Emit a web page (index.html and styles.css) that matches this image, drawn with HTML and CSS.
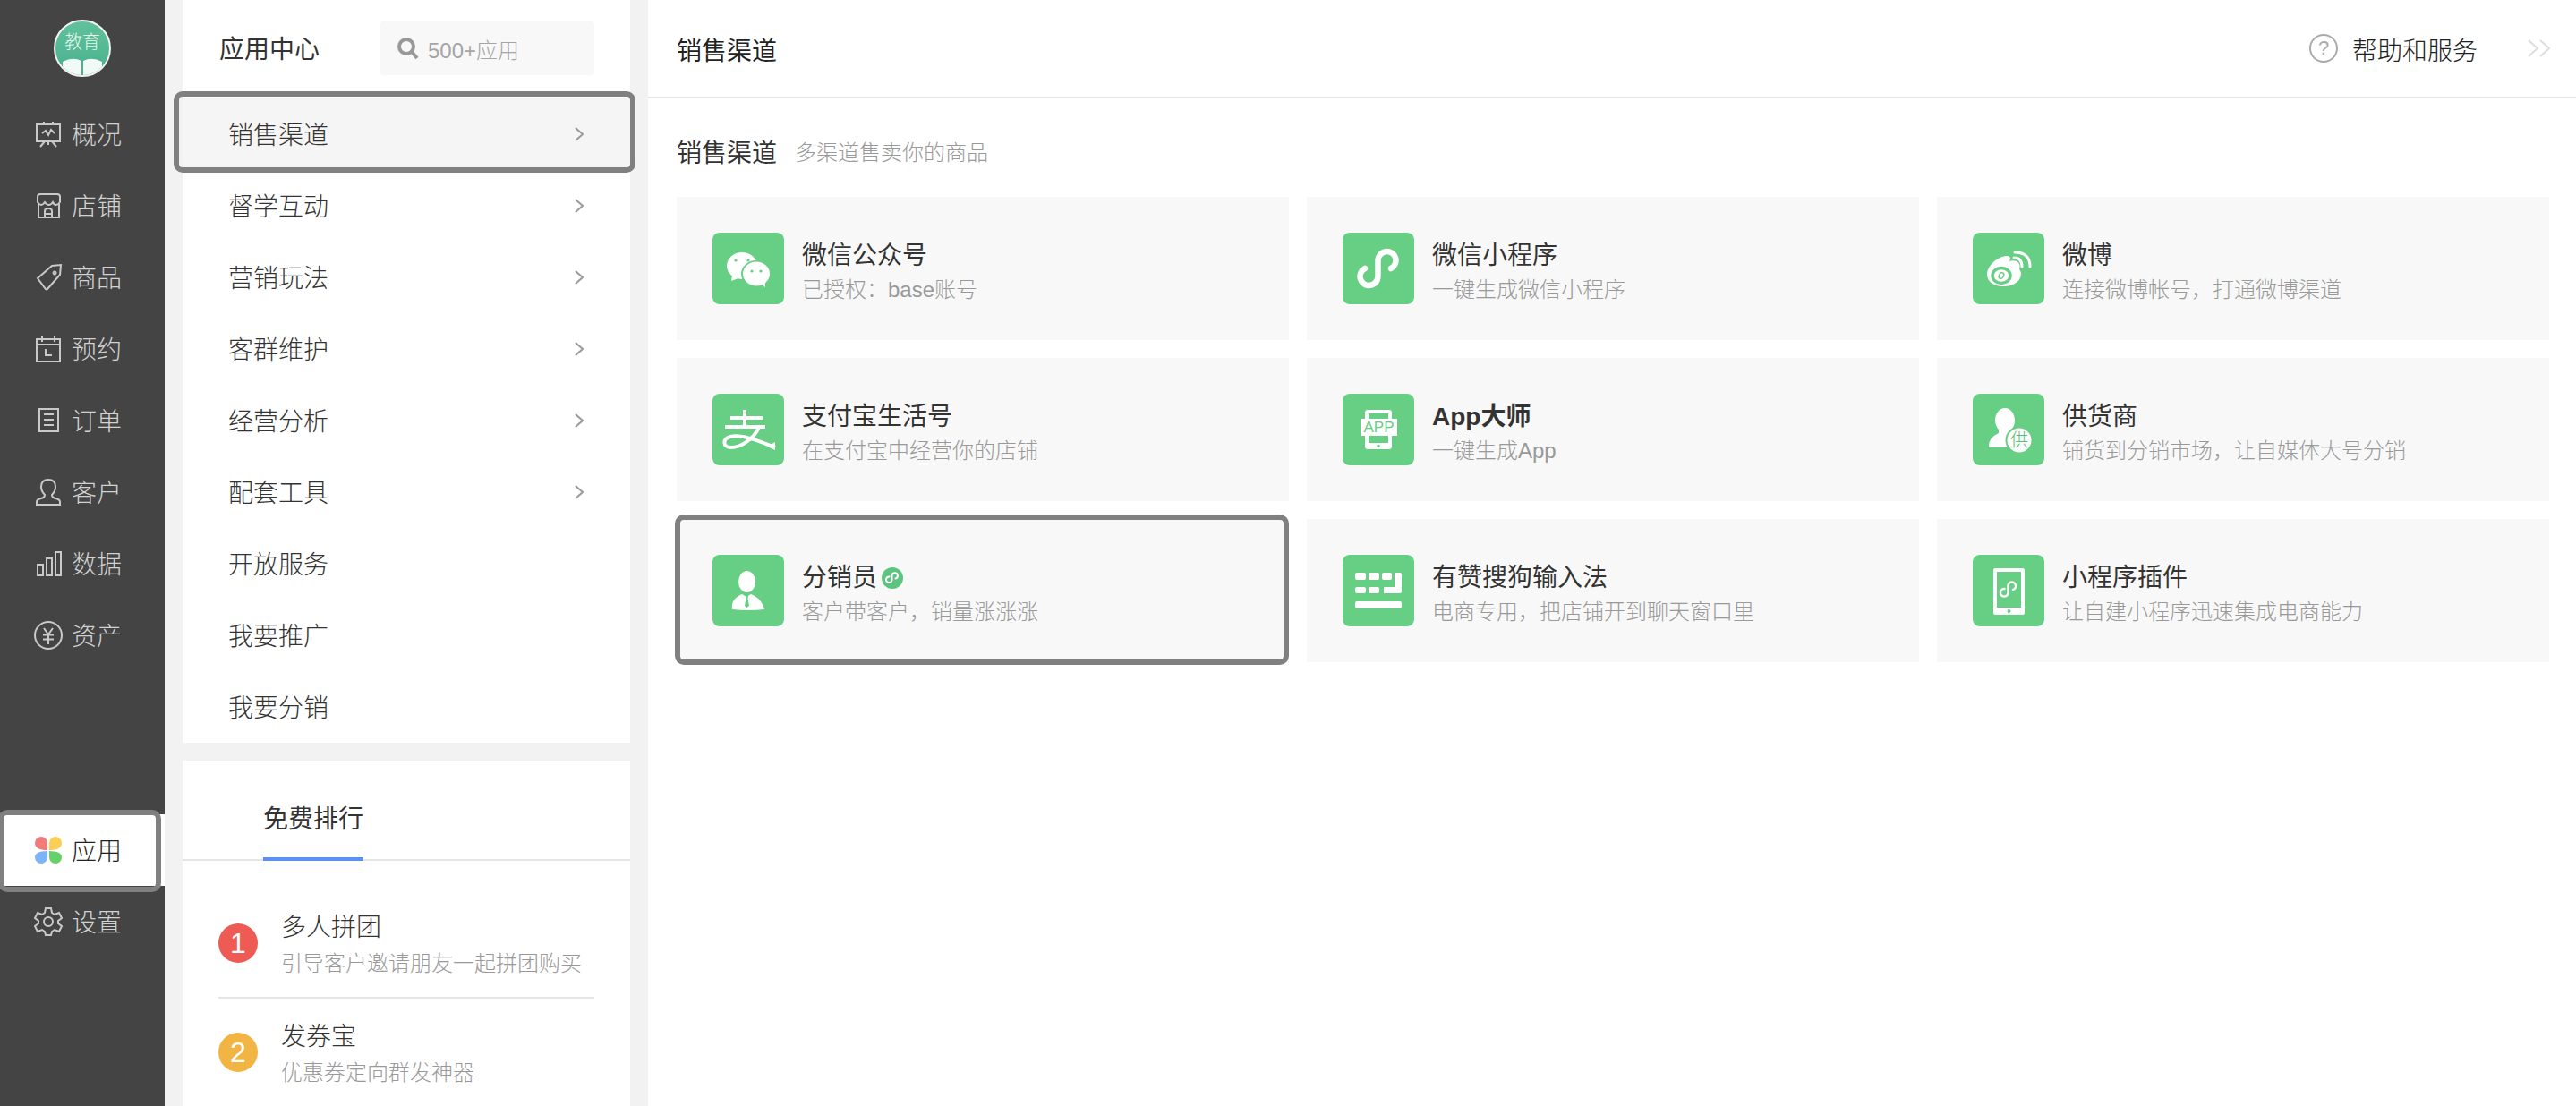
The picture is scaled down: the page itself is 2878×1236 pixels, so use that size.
FILE: index.html
```html
<!DOCTYPE html>
<html lang="zh-CN">
<head>
<meta charset="utf-8">
<title>应用中心</title>
<link rel="stylesheet" href="styles.css">
</head>
<body>
<svg class="defs" width="0" height="0" aria-hidden="true">
  <symbol id="chev" viewBox="0 0 12 16"><path d="M2 1l8 7-8 7" fill="none" stroke="#999" stroke-width="2"/></symbol>
</svg>
<aside class="nav">
  <div class="logo-wrap">
    <div class="avatar">
      <svg width="64" height="64" viewBox="0 0 64 64">
        <defs>
          <linearGradient id="ag" x1="0" y1="0" x2="0" y2="1"><stop offset="0" stop-color="#60c29d"/><stop offset="1" stop-color="#48b08b"/></linearGradient>
          <clipPath id="ac"><circle cx="32" cy="32" r="30"/></clipPath>
        </defs>
        <circle cx="32" cy="32" r="31" fill="url(#ag)" stroke="#f2f2f2" stroke-width="2"/>
        <path clip-path="url(#ac)" d="M10 47q11-6 21-1v20H10zM33 46q10-5 21 1v19H33z" fill="#f0fbf7"/>
        <text x="32" y="32" text-anchor="middle" class="avatar-text">教育</text>
      </svg>
    </div>
  </div>
  <a class="nav-item"><span class="nav-icon"><svg width="32" height="32" viewBox="0 0 32 32" class="ln"><path d="M3 5h26v19H3zM11 5V2M21 5V2M12 24l-5 6M20 24l5 6M16 24v4M9 15l4-3 3 5 3-6 4 4"/></svg></span><span class="nav-label">概况</span></a>
  <a class="nav-item"><span class="nav-icon"><svg width="32" height="32" viewBox="0 0 32 32" class="ln"><path d="M5 14v15h23V14M4 6q0-3 3-3h19q3 0 3 3v6q-2 3-4.300 3T21 12q-2 3-4.500 3T12 12q-2 3-4 3t-4-3zM12 29v-7q0-3 4-3t4 3v7M12 25h8"/></svg></span><span class="nav-label">店铺</span></a>
  <a class="nav-item"><span class="nav-icon"><svg width="32" height="32" viewBox="0 0 32 32" class="ln"><path d="M4 17L20 3l10-1-1 11-14 16q-1 1-2 0zM23 9.500a1.500 1.500 0 1 0 .1 0"/></svg></span><span class="nav-label">商品</span></a>
  <a class="nav-item"><span class="nav-icon"><svg width="32" height="32" viewBox="0 0 32 32" class="ln"><path d="M3 5h26v25H3zM3 11h26M9 2v6M23 2v6M13 16v7h7"/></svg></span><span class="nav-label">预约</span></a>
  <a class="nav-item"><span class="nav-icon"><svg width="32" height="32" viewBox="0 0 32 32" class="ln"><path d="M6 3h21v25H6zM11 9h11M11 15h11M11 21h11"/></svg></span><span class="nav-label">订单</span></a>
  <a class="nav-item"><span class="nav-icon"><svg width="32" height="32" viewBox="0 0 32 32" class="ln"><path d="M3 30v-3q0-3 5-4 4-1 4-4-4-4-4-9 0-8 8-8t8 8q0 5-4 9 0 3 4 4 5 1 5 4v3z"/></svg></span><span class="nav-label">客户</span></a>
  <a class="nav-item"><span class="nav-icon"><svg width="32" height="32" viewBox="0 0 32 32" class="ln"><path d="M4 17h6v12H4zM14 10h6v19h-6zM24 3h6v26h-6z"/></svg></span><span class="nav-label">数据</span></a>
  <a class="nav-item"><span class="nav-icon"><svg width="32" height="32" viewBox="0 0 32 32" class="ln"><circle cx="16" cy="16" r="15"/><path d="M11 8l5 7 5-7M10 15.500h12M10 20.500h12M16 15v11"/></svg></span><span class="nav-label">资产</span></a>
  <a class="nav-item is-active"><span class="nav-icon"><svg width="32" height="32" viewBox="0 0 32 32"><path d="M15 16V8a7 7 0 0 0-14 0q0 8 14 8z" fill="#ef7b7b"/><path d="M17 16V8a7 7 0 0 1 14 0q0 8-14 8z" fill="#fbcf55"/><path d="M15 17v7a7 7 0 0 1-14 0q0-7 14-7z" fill="#7db3f9"/><path d="M17 17v7a7 7 0 0 0 14 0q0-7-14-7z" fill="#66d16a"/></svg></span><span class="nav-label">应用</span></a>
  <a class="nav-item"><span class="nav-icon"><svg width="32" height="32" viewBox="0 0 32 32" class="ln"><path d="M13 1h6l1 5 3 2 5-2 3 6-4 3v3l4 3-3 6-5-2-3 2-1 4h-6l-1-4-3-2-5 2-3-6 4-3v-3l-4-3 3-6 5 2 3-2z"/><circle cx="16" cy="16" r="5"/></svg></span><span class="nav-label">设置</span></a>
</aside>

<div class="apps">
  <section class="menu-panel">
    <div class="menu-head">
      <span class="menu-title">应用中心</span>
      <div class="search">
        <svg width="24" height="24" viewBox="0 0 24 24"><circle cx="10" cy="10" r="8" fill="none" stroke="#999" stroke-width="4"/><path d="M16 16l6 7" stroke="#999" stroke-width="4"/></svg>
        <span>500+应用</span>
      </div>
    </div>
    <a class="menu-item is-focus">销售渠道<svg class="chev"><use href="#chev"/></svg></a>
    <a class="menu-item">督学互动<svg class="chev"><use href="#chev"/></svg></a>
    <a class="menu-item">营销玩法<svg class="chev"><use href="#chev"/></svg></a>
    <a class="menu-item">客群维护<svg class="chev"><use href="#chev"/></svg></a>
    <a class="menu-item">经营分析<svg class="chev"><use href="#chev"/></svg></a>
    <a class="menu-item">配套工具<svg class="chev"><use href="#chev"/></svg></a>
    <a class="menu-item">开放服务</a>
    <a class="menu-item">我要推广</a>
    <a class="menu-item">我要分销</a>
  </section>
  <section class="rank-panel">
    <div class="tabs"><span class="tab">免费排行</span></div>
    <ul class="rank-list">
      <li class="rank">
        <span class="rank-no red">1</span>
        <div><div class="rank-title">多人拼团</div><div class="rank-sub">引导客户邀请朋友一起拼团购买</div></div>
      </li>
      <li class="rank">
        <span class="rank-no orange">2</span>
        <div><div class="rank-title">发券宝</div><div class="rank-sub">优惠券定向群发神器</div></div>
      </li>
    </ul>
  </section>
</div>

<main class="main">
  <header class="top">
    <span class="top-title">销售渠道</span>
    <div class="help">
      <svg width="32" height="32" viewBox="0 0 32 32"><circle cx="16" cy="16" r="15" fill="none" stroke="#aaa" stroke-width="2"/><text x="16" y="23" text-anchor="middle" class="q">?</text></svg>
      <span class="help-label">帮助和服务</span>
    </div>
    <svg class="collapse" width="26" height="20" viewBox="0 0 26 20"><path d="M1 1l10 9-10 9M14 1l10 9-10 9" fill="none" stroke="#ddd" stroke-width="2"/></svg>
  </header>
  <div class="content">
    <h2 class="sec"><span class="sec-title">销售渠道</span><span class="sec-sub">多渠道售卖你的商品</span></h2>
    <div class="grid">
      <a class="card">
        <span class="ico"><svg width="80" height="80" viewBox="0 0 80 80">
          <ellipse cx="33" cy="37" rx="17" ry="15" fill="#fff"/><path d="M22 48l-1 6 8-3z" fill="#fff"/>
          <ellipse cx="49" cy="46" rx="17" ry="15" fill="#66cf84"/><ellipse cx="49" cy="46" rx="15" ry="13.500" fill="#fff"/><path d="M54 57l5 4 0-6z" fill="#fff"/>
          <g fill="#66cf84"><circle cx="26" cy="31" r="1.600"/><circle cx="40" cy="31" r="1.600"/><circle cx="44" cy="43" r="1.600"/><circle cx="54" cy="43" r="1.600"/></g>
        </svg></span>
        <span class="txt"><span class="t">微信公众号</span><span class="s">已授权：base账号</span></span>
      </a>
      <a class="card">
        <span class="ico"><svg width="80" height="80" viewBox="0 0 80 80"><path d="M25 40A10 10 0 1 0 39.500 49V31A10 10 0 1 1 54 40" fill="none" stroke="#fff" stroke-width="6.500" stroke-linecap="round"/></svg></span>
        <span class="txt"><span class="t">微信小程序</span><span class="s">一键生成微信小程序</span></span>
      </a>
      <a class="card">
        <span class="ico"><svg width="80" height="80" viewBox="0 0 80 80">
          <path d="M16 47c0-9 10-20 22-21 5 0 4 4 3 6 5-2 14 0 11 9 5 5 1 19-18 19-11 0-18-6-18-13z" fill="#fff"/>
          <ellipse cx="32" cy="48" rx="10" ry="8.500" fill="none" stroke="#66cf84" stroke-width="3.500"/>
          <ellipse cx="32" cy="48" rx="2.500" ry="3.500" fill="none" stroke="#66cf84" stroke-width="1.500" transform="rotate(25 32 48)"/>
          <path d="M46 28q9 0 9 10M47 22q17 0 17 16" fill="none" stroke="#fff" stroke-width="3" stroke-linecap="round"/>
        </svg></span>
        <span class="txt"><span class="t">微博</span><span class="s">连接微博帐号，打通微博渠道</span></span>
      </a>
      <a class="card">
        <span class="ico"><svg width="80" height="80" viewBox="0 0 80 80"><path d="M20 27h36M36 18v19M14 37h45M52 37C46 52 30 60 21 60 11 60 11 50 20 48 32 45 50 52 70 60" fill="none" stroke="#fff" stroke-width="4"/><path d="M70 54v9l-9-4z" fill="#fff"/></svg></span>
        <span class="txt"><span class="t">支付宝生活号</span><span class="s">在支付宝中经营你的店铺</span></span>
      </a>
      <a class="card">
        <span class="ico"><svg width="80" height="80" viewBox="0 0 80 80">
          <rect x="25" y="18" width="30" height="44" rx="3" fill="#fff"/>
          <path d="M29 22h22v6H29zM29 47h22v8H29z" fill="#66cf84"/><circle cx="40" cy="58.500" r="1.800" fill="#66cf84"/>
          <rect x="20" y="28" width="41" height="19" fill="#fff"/>
          <text x="40.500" y="43" text-anchor="middle" class="app-t">APP</text>
        </svg></span>
        <span class="txt"><span class="t b">App大师</span><span class="s">一键生成App</span></span>
      </a>
      <a class="card">
        <span class="ico"><svg width="80" height="80" viewBox="0 0 80 80">
          <path d="M36 16c6 0 11 6 11 14 0 5-2 8-4 10l1 3c-4 3-6 7-6 12l0 5H20q-2 0-2-2 0-9 11-14v-4c-2-2-4-6-4-10 0-8 5-14 11-14z" fill="#fff"/>
          <circle cx="52" cy="52" r="15.500" fill="#66cf84"/><circle cx="52" cy="52" r="13.500" fill="#fff"/>
          <text x="52" y="59" text-anchor="middle" class="gong">供</text>
        </svg></span>
        <span class="txt"><span class="t">供货商</span><span class="s">铺货到分销市场，让自媒体大号分销</span></span>
      </a>
      <a class="card is-focus">
        <span class="ico"><svg width="80" height="80" viewBox="0 0 80 80">
          <ellipse cx="38.500" cy="30" rx="9.500" ry="12" fill="#fff"/>
          <path d="M22 61c-1-8 2-13 11-17l5 3 5-3c9 4 13 9 15 17q-18 2-36 0z" fill="#fff"/>
          <path d="M37 46h3l-.5 3 1.500 8-2.500 2-2.500-2 1.500-8z" fill="#66cf84"/>
        </svg></span>
        <span class="txt"><span class="t">分销员<svg class="mini" width="24" height="24" viewBox="0 0 24 24"><circle cx="12" cy="12" r="12" fill="#5cc47e"/><path d="M8.500 10.500A3.300 3.300 0 1 0 11.500 14V9.500A3.200 3.200 0 1 1 15.500 12.500" fill="none" stroke="#fff" stroke-width="2" stroke-linecap="round"/></svg></span><span class="s">客户带客户，销量涨涨涨</span></span>
      </a>
      <a class="card">
        <span class="ico"><svg width="80" height="80" viewBox="0 0 80 80"><g fill="#fff"><rect x="14" y="20" width="12" height="8" rx="2"/><rect x="29" y="20" width="12" height="8" rx="2"/><rect x="44" y="20" width="11" height="8" rx="2"/><path d="M58 20h6q2 0 2 2v19q0 2-2 2H46v-7h12z"/><rect x="14" y="36" width="12" height="7" rx="2"/><rect x="29" y="36" width="12" height="7" rx="2"/><rect x="14" y="52" width="52" height="8" rx="2"/></g></svg></span>
        <span class="txt"><span class="t">有赞搜狗输入法</span><span class="s">电商专用，把店铺开到聊天窗口里</span></span>
      </a>
      <a class="card">
        <span class="ico"><svg width="80" height="80" viewBox="0 0 80 80">
          <rect x="23" y="15" width="35" height="52" rx="2" fill="#fff"/><rect x="27" y="19" width="27" height="40" fill="#66cf84"/><circle cx="40.500" cy="63" r="2" fill="#66cf84"/>
          <path d="M35.500 38A4.300 4.300 0 1 0 39.500 43V35A4.300 4.300 0 1 1 45 39" fill="none" stroke="#fff" stroke-width="2.500" stroke-linecap="round"/>
        </svg></span>
        <span class="txt"><span class="t">小程序插件</span><span class="s">让自建小程序迅速集成电商能力</span></span>
      </a>
    </div>
  </div>
</main>
</body>
</html>
```
FILE: styles.css
```css
* { box-sizing: border-box; }
html, body { margin: 0; padding: 0; height: 100%; overflow: hidden; }
body {
  display: flex;
  background: #fff;
  color: #333;
  font-family: "Liberation Sans", "Noto Sans CJK SC", sans-serif;
  font-size: 28px;
  font-weight: 300;
}
.defs { position: absolute; }
a { color: inherit; text-decoration: none; }

/* left rail */
.nav { width: 184px; flex: none; background: #444; color: #d2d2d2; }
.logo-wrap { height: 110px; padding: 22px 0 0 60px; }
.avatar { width: 64px; height: 64px; }
.avatar-text { font-size: 20px; fill: #e4f6ee; }
.nav-item { display: flex; align-items: center; height: 80px; padding-left: 38px; line-height: 40px; position: relative; }
.nav-icon { width: 32px; height: 32px; margin-right: 10px; display: block; }
.nav-label { padding-top: 3px; }
.ln { fill: none; stroke: #c9c9c9; stroke-width: 2; }
.nav-item.is-active { background: #fff; color: #222; margin-top: 160px; }
.nav-item.is-active::after {
  content: "";
  position: absolute;
  left: -2px; right: 4px; top: -5px; bottom: -7px;
  border: 6px solid #808080;
  border-radius: 10px;
}

/* app column */
.apps { width: 540px; flex: none; padding: 0 20px; background: #f2f2f2; display: flex; flex-direction: column; gap: 20px; }
.menu-panel { background: #fff; height: 830px; flex: none; }
.menu-head { height: 110px; display: flex; align-items: flex-start; padding: 24px 40px 0 41px; justify-content: space-between; }
.menu-title { line-height: 60px; padding-top: 2px; font-weight: 400; color: #333; }
.search { width: 240px; height: 60px; border-radius: 4px; background: #f8f8f8; display: flex; align-items: center; padding-left: 20px; gap: 10px; color: #a5a5a5; font-size: 24px; }
.menu-item { display: flex; align-items: center; justify-content: space-between; height: 80px; padding: 0 51px 2px; position: relative; color: #333; }
.chev { width: 12px; height: 16px; margin-top: 2px; }
.menu-item.is-focus { background: #f5f5f5; }
.menu-item.is-focus::after {
  content: "";
  position: absolute;
  left: -10px; right: -6px; top: -8px; bottom: -3px;
  border: 6px solid #808080;
  border-radius: 10px;
}

.rank-panel { background: #fff; flex: 1; min-height: 0; overflow: hidden; }
.tabs { height: 112px; border-bottom: 2px solid #e5e5e5; padding-left: 90px; }
.tab { display: block; width: 112px; height: 112px; padding-top: 46px; line-height: 40px; border-bottom: 4px solid #5b8ff0; font-weight: 400; color: #333; }
.rank-list { list-style: none; margin: 32px 40px 0; padding: 0; }
.rank { display: flex; align-items: flex-start; gap: 26px; height: 122px; padding-top: 23px; border-bottom: 2px solid #e5e5e5; }
.rank:last-child { border-bottom: 0; }
.rank-no { width: 44px; height: 44px; border-radius: 50%; margin-top: 15px; color: #fff; text-align: center; line-height: 44px; font-size: 32px; flex: none; }
.red { background: #ee5b55; }
.orange { background: #f2b544; }
.rank-title { line-height: 40px; color: #333; }
.rank-sub { line-height: 36px; padding-top: 2px; font-size: 24px; color: #999; }

/* main */
.main { flex: 1; min-width: 0; }
.top { height: 110px; border-bottom: 2px solid #e5e5e5; display: flex; align-items: center; padding: 0 28px 0 32px; }
.top-title { flex: 1; padding-top: 2px; font-weight: 400; color: #222; }
.help { display: flex; align-items: center; gap: 16px; color: #222; }
.help-label { padding-top: 2px; }
.q { font-size: 22px; fill: #aaa; }
.collapse { margin-left: 56px; }
.content { padding: 40px 30px 0 32px; }
.sec { margin: 0 0 30px; height: 40px; font-weight: normal; font-size: 28px; line-height: 40px; display: flex; align-items: center; gap: 20px; }
.sec-title { font-weight: 400; padding-top: 3px; color: #333; }
.sec-sub { font-size: 24px; padding-top: 2px; font-weight: 300; color: #999; }
.grid { display: grid; grid-template-columns: repeat(3, 684px); grid-auto-rows: 160px; gap: 20px; }
.card { display: flex; align-items: flex-start; padding: 40px; gap: 20px; background: #f8f8f8; position: relative; }
.card.is-focus::after {
  content: "";
  position: absolute;
  left: -2px; right: 0; top: -5px; bottom: -3px;
  border: 6px solid #808080;
  border-radius: 10px;
}
.ico { width: 80px; height: 80px; flex: none; border-radius: 8px; background: #66cf84; overflow: hidden; }
.ico svg { display: block; }
.txt { display: block; }
.t { display: flex; align-items: center; gap: 5px; line-height: 46px; padding-top: 3px; margin-bottom: -3px; font-weight: 400; color: #333; }
.t.b { font-weight: 700; }
.s { display: block; line-height: 36px; font-size: 24px; color: #999; }
.app-t { font-size: 17px; fill: #66cf84; font-family: "Liberation Sans", sans-serif; }
.gong { font-size: 20px; fill: #52c06f; }
```
